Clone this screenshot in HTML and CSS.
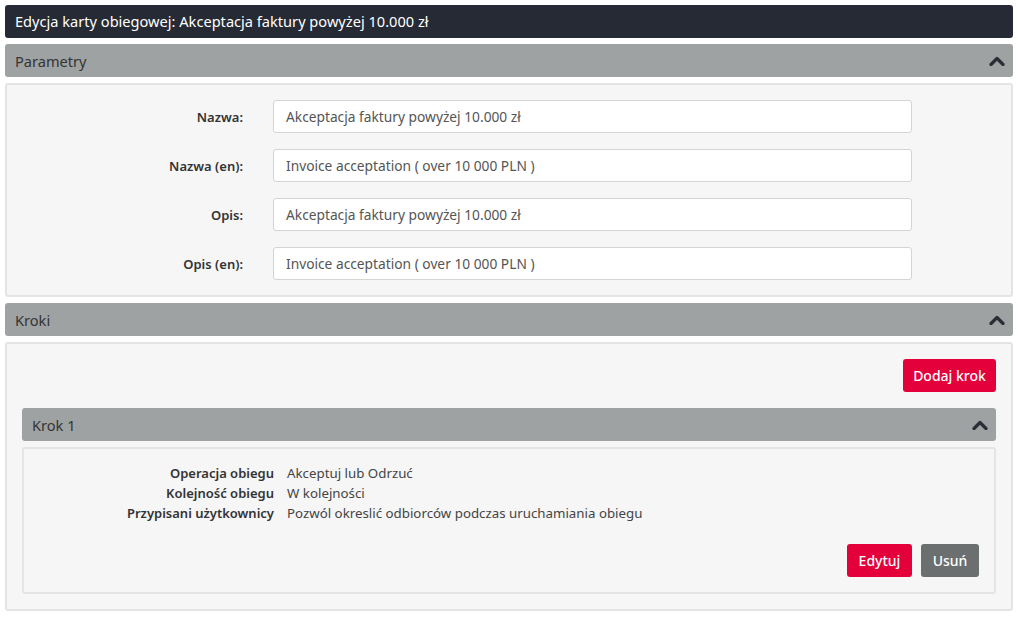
FILE: index.html
```html
<!DOCTYPE html>
<html lang="pl">
<head>
<meta charset="utf-8">
<title>Edycja karty obiegowej</title>
<link rel="stylesheet" href="styles.css">
</head>
<body>
<div class="page">
  <div class="titlebar">Edycja karty obiegowej: Akceptacja faktury powyżej 10.000 zł</div>

  <div class="section-header">
    <span>Parametry</span>
    <svg class="chev" width="16" height="10" viewBox="0 0 16 10"><polyline points="2,8.5 8,2.5 14,8.5" fill="none" stroke="#2b2e36" stroke-width="3.2" stroke-linecap="round" stroke-linejoin="round"/></svg>
  </div>
  <div class="panel params">
    <div class="form">
      <label class="flabel">Nazwa:</label>
      <div class="input">Akceptacja faktury powyżej 10.000 zł</div>
      <label class="flabel">Nazwa (en):</label>
      <div class="input">Invoice acceptation ( over 10 000 PLN )</div>
      <label class="flabel">Opis:</label>
      <div class="input">Akceptacja faktury powyżej 10.000 zł</div>
      <label class="flabel">Opis (en):</label>
      <div class="input">Invoice acceptation ( over 10 000 PLN )</div>
    </div>
  </div>

  <div class="section-header">
    <span>Kroki</span>
    <svg class="chev" width="16" height="10" viewBox="0 0 16 10"><polyline points="2,8.5 8,2.5 14,8.5" fill="none" stroke="#2b2e36" stroke-width="3.2" stroke-linecap="round" stroke-linejoin="round"/></svg>
  </div>
  <div class="panel steps">
    <div class="actions-top">
      <button class="btn btn-red">Dodaj krok</button>
    </div>
    <div class="section-header step-header">
      <span>Krok 1</span>
      <svg class="chev" width="16" height="10" viewBox="0 0 16 10"><polyline points="2,8.5 8,2.5 14,8.5" fill="none" stroke="#2b2e36" stroke-width="3.2" stroke-linecap="round" stroke-linejoin="round"/></svg>
    </div>
    <div class="panel step">
      <div class="details">
        <div class="dlabel">Operacja obiegu</div>
        <div class="dvalue">Akceptuj lub Odrzuć</div>
        <div class="dlabel">Kolejność obiegu</div>
        <div class="dvalue">W kolejności</div>
        <div class="dlabel">Przypisani użytkownicy</div>
        <div class="dvalue">Pozwól okreslić odbiorców podczas uruchamiania obiegu</div>
      </div>
      <div class="actions-bottom">
        <button class="btn btn-red">Edytuj</button>
        <button class="btn btn-gray">Usuń</button>
      </div>
    </div>
  </div>
</div>
</body>
</html>
```

FILE: styles.css
```css
* { box-sizing: border-box; }
html, body { margin: 0; padding: 0; background: #ffffff; }
body {
  font-family: "Noto Sans", "Open Sans", "DejaVu Sans", sans-serif;
  color: #333;
}
.page {
  padding: 5px 5px 0 5px;
  display: flex;
  flex-direction: column;
}
.titlebar {
  height: 33px;
  line-height: 33px;
  background: #262a34;
  color: #fff;
  font-size: 14.6px;
  padding: 0 10px;
  border-radius: 3px;
}
.section-header {
  margin-top: 6px;
  height: 33px;
  background: #9ea2a2;
  color: #343434;
  font-size: 14.6px;
  padding: 0 10px;
  border-radius: 3px;
  display: flex;
  align-items: center;
  justify-content: space-between;
}
.chev { margin-right: -2px; }
.panel {
  margin-top: 6px;
  background: #f6f6f6;
  border: 2px solid #e4e4e4;
  border-radius: 3px;
}
.params { padding: 15px 0 15px 0; }
.form {
  display: grid;
  grid-template-columns: 236px 639px;
  column-gap: 30px;
  row-gap: 16px;
  align-items: center;
}
.flabel {
  text-align: right;
  font-size: 13px;
  font-weight: 600;
  color: #333;
}
.input {
  height: 33px;
  line-height: 31px;
  background: #fff;
  border: 1px solid #d4d4d4;
  border-radius: 3px;
  padding: 0 12px;
  font-size: 13.75px;
  color: #555;
}
.steps { padding: 15px; }
.actions-top {
  display: flex;
  justify-content: flex-end;
}
.btn {
  height: 33px;
  border: none;
  border-radius: 3px;
  color: #fff;
  font-family: "Noto Sans", "Open Sans", sans-serif;
  font-size: 14px;
  font-weight: 500;
  padding: 0;
  white-space: nowrap;
  cursor: pointer;
}
.btn-red { background: #e3003b; }
.btn-gray { background: #6c6f70; }
.actions-top .btn { width: 93px; }
.step-header { margin-top: 16px; }
.step {
  padding: 14px 15px 15px 15px;
}
.details {
  display: grid;
  grid-template-columns: 235px auto;
  column-gap: 13px;
  font-size: 13.3px;
  line-height: 20px;
}
.dlabel {
  text-align: right;
  font-size: 13px;
  font-weight: 600;
  color: #333;
}
.dvalue { color: #444; }
.actions-bottom {
  margin-top: 21px;
  display: flex;
  justify-content: flex-end;
  gap: 9px;
}
.actions-bottom .btn-red { width: 65px; }
.actions-bottom .btn-gray { width: 58px; }
```
